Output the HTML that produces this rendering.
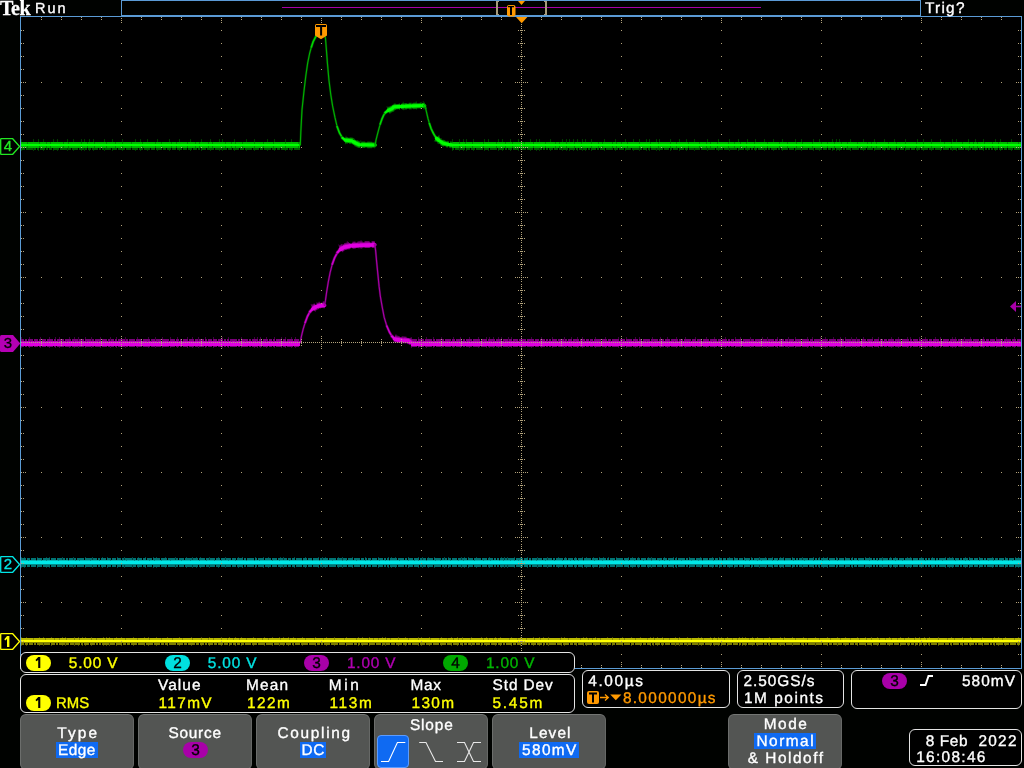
<!DOCTYPE html><html><head><meta charset="utf-8"><title>Tek scope</title><style>
html,body{margin:0;padding:0;background:#000200}
body{width:1024px;height:768px;position:relative;overflow:hidden;font-family:"Liberation Sans",sans-serif;font-size:15.4px;line-height:20px;color:#fff}
#scope{position:absolute;left:0;top:0;will-change:transform}
.mk{font-family:"Liberation Sans",sans-serif}
#txt{position:absolute;left:0;top:0;width:1024px;height:768px;will-change:transform}
.t{position:absolute;white-space:pre;height:20px;-webkit-text-stroke:0.35px currentColor;text-rendering:geometricPrecision}
.box{position:absolute;border:1px solid #e4e4e4;border-radius:6px;background:#000;box-sizing:border-box}
.btn{position:absolute;top:714px;height:56px;width:114px;background:#535553;border-radius:6px;box-sizing:border-box;border:1px solid #666866;border-top-color:#747674;border-left-color:#6c6e6c}
.hl{position:absolute;background:#0f6af2}
.pill{position:absolute;width:25px;height:16px;border-radius:8px;color:#000;text-align:center;line-height:15px;font-size:16px;-webkit-text-stroke:0.3px #000}
#tek{position:absolute;left:0;top:-3px;font:bold 20.6px "Liberation Serif",serif;letter-spacing:-0.5px;line-height:22px;transform-origin:0 0;transform:scaleX(0.975);-webkit-text-stroke:0.3px #fff}

</style></head><body>
<svg id="scope" width="1024" height="768" viewBox="0 0 1024 768">
<rect x="21" y="17" width="1000" height="651" fill="#000"/>
<g fill="none" stroke-linejoin="round">
<g shape-rendering="crispEdges">
<path d="M21 641.5H1021" stroke="#444400" stroke-width="9" stroke-dasharray="1 4 1 12 1 3 1 7 1 10 1 2 1 8 1 3 1 3 1 2 1 5 1 11 1 2 1 2 1 6 1 4 1 11 1 10 1 3 1 7 1 10 1 11 1 11 1 9 1 7 1 11 1 7 1 5 1 5 1 11 1 10 1 7 1 6 1 3 1 4 1 4 1 8 1 12 1 10 1 7 1 11 1 11 1 3 1 6 1 12 1 2 1 12 1 6 1 12 1 2 1 7 1 11 1 9 1 5 1 4 1 8 1 9 1 4 1 8 1 4 1 10 1 8 1 12 1 5 1 3 1 4 1 12 1 2 1 11 1 6 1 2 1 8 1 11 1 4 1 9 1 8 1 8 1 9 1 2 1 3"/>
<path d="M21 641.5H1021" stroke="#7c7c00" stroke-width="7" stroke-dasharray="3 1 3 1 4 1 2 1 6 1 6 1 4 1 2 1 6 1 3 1 4 1 5 1 2 1 5 1 5 1 2 1 2 1 7 1 5 1 6 1 3 1 3 1 6 1 7 1 7 1 6 1 3 1 3 1 7 1 6 1 3 1 7 1 3 1 4 1 2 1 5 1 3 1 5 1 4 1 3 1 3 1 3 1 3 1 6 1 5 1 7 1 7 1 5 1 5 1 5 1 2 1 5 1 7 1 7 1 3 1 2 1 6 1 7 1 6 1 7 1 3 1 2 1 7 1 6 1 5 1 3 1 4 1 4 1 6 1 4 1 3 1 7 1 5 1 6 1 6 1 6 1 5 1 6 1 3 1 3 1"/>
<path d="M21 640.5H1021" stroke="#8c8c00" stroke-width="5"/>
<path d="M21 640.0H1021" stroke="#b8b800" stroke-width="4" stroke-dasharray="12 1 11 1 8 1 4 1 6 1 7 1 4 1 11 1 4 1 8 1 7 1 11 1 11 1 11 1 11 1 10 1 9 1 9 1 8 1 6 1 4 1 7 1 5 1 5 1 5 1 6 1 9 1 5 1 5 1 11 1 8 1 6 1 8 1 8 1 8 1 10 1 9 1 11 1 11 1 4 1 4 1 7 1 3 1 7 1 9 1 9 1 11 1 8 1 7 1 5 1 4 1 3 1 7 1 12 1 4 1 4 1 3 1 11 1 7 1 3 1 4 1 7 1 5 1 7 1 11 1 7 1 11 1 7 1 3 1 3 1 3 1 11 1 6 1 4 1 10 1 11 1 6 1 8 1 5 1 8 1"/>
<path d="M21 641.0H1021" stroke="#ffff00" stroke-width="2"/>
</g>
<g shape-rendering="crispEdges">
<path d="M21 562.5H1021" stroke="#004040" stroke-width="11" stroke-dasharray="1 2 1 12 1 8 1 2 1 12 1 10 1 11 1 6 1 9 1 4 1 9 1 6 1 7 1 5 1 6 1 7 1 2 1 8 1 9 1 10 1 5 1 3 1 3 1 8 1 8 1 6 1 12 1 3 1 12 1 7 1 4 1 11 1 2 1 10 1 10 1 12 1 3 1 2 1 12 1 3 1 9 1 12 1 12 1 9 1 2 1 3 1 12 1 9 1 3 1 5 1 5 1 9 1 3 1 12 1 2 1 3 1 7 1 12 1 11 1 2 1 2 1 6 1 5 1 6 1 9 1 9 1 10 1 6 1 9 1 6 1 3 1 6 1 5 1 3 1 4 1 7 1 11 1 3 1 5 1 9"/>
<path d="M21 562.5H1021" stroke="#007474" stroke-width="9" stroke-dasharray="5 1 3 1 5 1 5 1 7 1 5 1 5 1 2 1 2 1 4 1 2 1 7 1 7 1 4 1 2 1 5 1 4 1 4 1 4 1 2 1 7 1 3 1 5 1 3 1 5 1 7 1 6 1 7 1 2 1 5 1 7 1 5 1 6 1 3 1 5 1 4 1 4 1 5 1 4 1 6 1 2 1 7 1 2 1 6 1 6 1 5 1 5 1 3 1 3 1 3 1 6 1 4 1 4 1 6 1 2 1 5 1 7 1 5 1 4 1 5 1 6 1 3 1 2 1 3 1 5 1 5 1 2 1 2 1 7 1 6 1 2 1 5 1 5 1 2 1 3 1 6 1 7 1 2 1 2 1 3 1"/>
<path d="M21 562.5H1021" stroke="#008c8c" stroke-width="5"/>
<path d="M21 562.0H1021" stroke="#00b8b8" stroke-width="4" stroke-dasharray="7 1 7 1 4 1 4 1 11 1 9 1 6 1 3 1 10 1 8 1 10 1 11 1 3 1 7 1 3 1 10 1 4 1 6 1 8 1 10 1 8 1 8 1 6 1 7 1 6 1 6 1 6 1 10 1 7 1 4 1 12 1 6 1 9 1 12 1 9 1 6 1 12 1 9 1 3 1 9 1 8 1 4 1 8 1 5 1 3 1 9 1 8 1 5 1 3 1 7 1 8 1 4 1 9 1 7 1 4 1 10 1 8 1 6 1 8 1 3 1 6 1 3 1 3 1 4 1 7 1 4 1 8 1 8 1 7 1 7 1 3 1 3 1 4 1 10 1 7 1 10 1 10 1 3 1 5 1 8 1"/>
<path d="M21 562.5H1021" stroke="#00e8e8" stroke-width="3"/>
</g>
<g shape-rendering="crispEdges">
<path d="M21 342.5H300.4" stroke="#400040" stroke-width="11" stroke-dasharray="1 7 1 10 1 8 1 5 1 3 1 9 1 4 1 3 1 6 1 5 1 8 1 9 1 5 1 8 1 11 1 10 1 6 1 6 1 7 1 6 1 9 1 4 1 5 1 6 1 7 1 8 1 5 1 12 1 12 1 2 1 2 1 5 1 7 1 6 1 3 1 5 1 3 1 10 1 9 1 12 1 3 1 5 1 7 1 4 1 5 1 2 1 2 1 8 1 4 1 3 1 2 1 10 1 3 1 3 1 12 1 12 1 12 1 8 1 8 1 12 1 8 1 6 1 8 1 2 1 12 1 8 1 5 1 8 1 8 1 3 1 11 1 9 1 4 1 2 1 12 1 3 1 10 1 4 1 6 1 10"/>
<path d="M21 343.0H300.4" stroke="#780078" stroke-width="8" stroke-dasharray="3 1 2 1 5 1 4 1 2 1 4 1 6 1 2 1 7 1 6 1 6 1 5 1 6 1 2 1 6 1 5 1 2 1 3 1 2 1 7 1 2 1 6 1 6 1 7 1 4 1 5 1 7 1 5 1 3 1 2 1 5 1 5 1 3 1 5 1 2 1 4 1 4 1 5 1 2 1 2 1 7 1 2 1 7 1 2 1 6 1 3 1 5 1 3 1 2 1 6 1 3 1 6 1 5 1 4 1 3 1 6 1 4 1 2 1 3 1 3 1 7 1 5 1 4 1 6 1 7 1 5 1 4 1 7 1 4 1 4 1 4 1 2 1 3 1 6 1 4 1 4 1 7 1 7 1 3 1 4 1"/>
<path d="M21 343.5H300.4" stroke="#900090" stroke-width="5"/>
<path d="M21 343.5H300.4" stroke="#b800b8" stroke-width="5" stroke-dasharray="9 1 3 1 10 1 12 1 3 1 3 1 7 1 11 1 11 1 9 1 12 1 6 1 12 1 5 1 3 1 5 1 4 1 5 1 9 1 3 1 11 1 12 1 12 1 6 1 3 1 3 1 9 1 6 1 3 1 3 1 5 1 6 1 12 1 11 1 4 1 3 1 11 1 9 1 10 1 10 1 6 1 7 1 3 1 8 1 3 1 11 1 11 1 7 1 4 1 5 1 6 1 5 1 6 1 8 1 9 1 10 1 3 1 6 1 6 1 12 1 12 1 5 1 3 1 4 1 8 1 3 1 3 1 3 1 3 1 12 1 6 1 9 1 6 1 6 1 3 1 4 1 10 1 5 1 6 1 8 1"/>
<path d="M21 344.0H300.4" stroke="#e000e0" stroke-width="4"/>
</g>
<g shape-rendering="crispEdges">
<path d="M411 342.5H1021" stroke="#400040" stroke-width="11" stroke-dasharray="1 6 1 7 1 6 1 7 1 11 1 6 1 8 1 8 1 7 1 2 1 3 1 4 1 2 1 6 1 2 1 9 1 9 1 9 1 10 1 11 1 6 1 5 1 4 1 12 1 9 1 12 1 7 1 8 1 3 1 12 1 7 1 6 1 8 1 8 1 9 1 10 1 7 1 10 1 9 1 4 1 9 1 11 1 4 1 9 1 10 1 6 1 11 1 4 1 7 1 4 1 7 1 6 1 4 1 5 1 4 1 6 1 8 1 5 1 12 1 6 1 8 1 2 1 8 1 5 1 9 1 4 1 11 1 2 1 8 1 5 1 12 1 12 1 9 1 7 1 12 1 8 1 8 1 6 1 9 1 2"/>
<path d="M411 343.0H1021" stroke="#780078" stroke-width="8" stroke-dasharray="6 1 6 1 7 1 2 1 5 1 2 1 6 1 3 1 6 1 2 1 6 1 7 1 6 1 7 1 6 1 5 1 3 1 5 1 7 1 7 1 4 1 5 1 2 1 2 1 5 1 6 1 2 1 4 1 6 1 5 1 3 1 3 1 7 1 5 1 3 1 7 1 5 1 6 1 5 1 3 1 7 1 7 1 5 1 5 1 7 1 4 1 7 1 4 1 5 1 6 1 7 1 3 1 5 1 2 1 3 1 7 1 7 1 3 1 7 1 4 1 6 1 3 1 5 1 3 1 5 1 6 1 7 1 3 1 7 1 6 1 7 1 7 1 6 1 4 1 3 1 5 1 6 1 5 1 3 1 3 1"/>
<path d="M411 343.5H1021" stroke="#900090" stroke-width="5"/>
<path d="M411 343.5H1021" stroke="#b800b8" stroke-width="5" stroke-dasharray="5 1 5 1 10 1 7 1 8 1 9 1 5 1 3 1 12 1 8 1 11 1 10 1 3 1 9 1 8 1 8 1 10 1 7 1 8 1 7 1 7 1 8 1 9 1 11 1 11 1 6 1 4 1 6 1 7 1 12 1 3 1 11 1 11 1 9 1 4 1 3 1 10 1 11 1 12 1 12 1 6 1 10 1 4 1 3 1 4 1 8 1 7 1 7 1 9 1 8 1 9 1 10 1 4 1 12 1 10 1 3 1 12 1 10 1 11 1 4 1 6 1 3 1 3 1 4 1 6 1 5 1 3 1 12 1 10 1 3 1 5 1 7 1 10 1 3 1 3 1 3 1 9 1 7 1 10 1 8 1"/>
<path d="M411 344.0H1021" stroke="#e000e0" stroke-width="4"/>
</g>
<polyline points="300.4,342.5 301.4,336.3 303.1,329.4 305.2,322.5" stroke="#640064" stroke-width="2.2" stroke-opacity="0.55" stroke-linecap="round"/>
<polyline points="300.4,342.5 301.4,336.3 303.1,329.4 305.2,322.5" stroke="#a800a8" stroke-width="1.15" stroke-linecap="round"/>
<polyline points="305.2,322.5 307.4,316.5 310.0,311.7" stroke="#640064" stroke-width="2.8" stroke-opacity="0.7" stroke-linecap="round"/>
<polyline points="305.2,322.5 307.4,316.5 310.0,311.7" stroke="#cc00cc" stroke-width="1.6" stroke-linecap="round"/>
<polyline points="310.0,311.7 312.9,308.6" stroke="#640064" stroke-width="3.6" stroke-opacity="0.8" stroke-linecap="round"/>
<polyline points="310.0,311.7 312.9,308.6" stroke="#e000e0" stroke-width="2.2" stroke-linecap="round"/>
<polyline points="312.9,308.1 316.4,305.9 319.8,305.0 324.6,304.5" stroke="#400040" stroke-width="9" stroke-dasharray="1 19 1 8 1 15 1 24 1 19 1 18 1 22 1 13 1 5 1 23 1 8 1 22 1 11 1 16 1 23 1 18 1 26 1 14 1 12 1 9 1 13 1 22 1 12 1 15 1 21 1 16 1 11 1 23 1 25 1 18 1 12 1 16 1 21 1 21 1 6 1 16 1 20 1 19 1 10 1 10 1 9 1 15 1 16 1 11 1 19 1 7 1 24 1 6 1 14 1 15 1 20 1 7 1 10 1 22 1 12 1 17 1 18 1 12 1 14 1 9"/>
<polyline points="312.9,308.3 316.4,306.1 319.8,305.2 324.6,304.7" stroke="#640064" stroke-width="7" stroke-dasharray="4 1 1 1 1 3 3 3 4 2 1 3 4 1 1 2 3 3 2 3 1 3 5 2 2 2 2 2 2 3 2 1 1 2 3 1 5 1 1 2 5 3 4 1 1 1 3 1 2 3 3 3 5 2 1 2 3 2 3 2 1 2 4 2 2 2 2 1 1 2 2 1 2 1 1 3 3 3 2 2 1 2 1 3 1 2 3 2 2 2 1 3 3 1 3 1 1 1 4 3 2 2 2 2 4 2 2 1 1 2 5 2 3 1 3 2 1 2 4 2"/>
<polyline points="312.9,308.6 316.4,306.4 319.8,305.5 324.6,305.0" stroke="#a400a4" stroke-width="5.2" stroke-dasharray="4 1 11 1 13 1 11 1 7 1 7 1 8 1 7 1 6 1 9 1 9 1 3 1 5 1 10 1 11 1 10 1 11 1 5 1 9 1 9 1 7 1 5 1 11 1 14 1 6 1 4 1 7 1 6 1 12 1 12 1 6 1 4 1 14 1 11 1 8 1 13 1 4 1 9 1 5 1 6 1 12 1 3 1 14 1 12 1 8 1 11 1 4 1 14 1 8 1 12 1 7 1 14 1 10 1 11 1 3 1 4 1 12 1 5 1 7 1 11 1"/>
<polyline points="312.9,308.8 316.4,306.6 319.8,305.7 324.6,305.2" stroke="#e000e0" stroke-width="3.6" stroke-linecap="round"/>
<polyline points="324.6,305.0 325.5,300.2 326.7,291.6 328.4,281.3 330.1,272.7 332.3,264.1" stroke="#640064" stroke-width="2.2" stroke-opacity="0.55" stroke-linecap="round"/>
<polyline points="324.6,305.0 325.5,300.2 326.7,291.6 328.4,281.3 330.1,272.7 332.3,264.1" stroke="#a800a8" stroke-width="1.15" stroke-linecap="round"/>
<polyline points="332.3,264.1 334.7,257.6 337.5,252.4" stroke="#640064" stroke-width="2.8" stroke-opacity="0.7" stroke-linecap="round"/>
<polyline points="332.3,264.1 334.7,257.6 337.5,252.4" stroke="#cc00cc" stroke-width="1.6" stroke-linecap="round"/>
<polyline points="337.5,252.4 340.4,249.2" stroke="#640064" stroke-width="3.6" stroke-opacity="0.8" stroke-linecap="round"/>
<polyline points="337.5,252.4 340.4,249.2" stroke="#e000e0" stroke-width="2.2" stroke-linecap="round"/>
<polyline points="340.4,248.7 343.9,246.6 349.9,245.2 360.2,244.5 374.8,244.2" stroke="#400040" stroke-width="9" stroke-dasharray="1 7 1 12 1 23 1 20 1 26 1 7 1 7 1 5 1 7 1 19 1 7 1 7 1 8 1 11 1 25 1 16 1 4 1 26 1 23 1 16 1 15 1 16 1 14 1 22 1 16 1 14 1 25 1 11 1 25 1 15 1 20 1 6 1 17 1 20 1 11 1 17 1 18 1 5 1 24 1 25 1 24 1 23 1 12 1 20 1 17 1 5 1 7 1 15 1 7 1 23 1 6 1 22 1 18 1 20 1 13 1 22 1 12 1 6 1 18 1 24"/>
<polyline points="340.4,248.9 343.9,246.8 349.9,245.4 360.2,244.7 374.8,244.4" stroke="#640064" stroke-width="7" stroke-dasharray="4 1 5 3 3 2 5 2 5 2 4 2 1 1 3 1 2 3 5 2 5 2 1 2 2 1 3 3 3 2 3 2 2 2 1 1 2 3 1 3 3 2 1 3 4 2 3 3 1 3 2 3 2 2 3 3 3 1 2 3 5 2 5 1 4 2 2 2 1 1 4 3 5 1 4 2 5 1 4 2 5 3 1 2 4 3 4 2 3 2 3 2 5 3 5 2 3 1 4 2 4 2 2 3 3 1 4 3 4 3 2 1 3 2 5 1 3 1 4 1"/>
<polyline points="340.4,249.2 343.9,247.1 349.9,245.7 360.2,245.0 374.8,244.7" stroke="#a400a4" stroke-width="5.2" stroke-dasharray="3 1 7 1 7 1 11 1 11 1 9 1 8 1 12 1 10 1 13 1 11 1 4 1 8 1 13 1 6 1 10 1 10 1 14 1 5 1 8 1 4 1 11 1 4 1 14 1 11 1 13 1 11 1 11 1 11 1 9 1 3 1 8 1 14 1 3 1 7 1 7 1 4 1 13 1 6 1 10 1 13 1 12 1 9 1 5 1 11 1 3 1 4 1 11 1 10 1 3 1 13 1 5 1 8 1 5 1 7 1 12 1 8 1 10 1 3 1 6 1"/>
<polyline points="340.4,249.4 343.9,247.3 349.9,245.9 360.2,245.2 374.8,244.9" stroke="#e000e0" stroke-width="3.6" stroke-linecap="round"/>
<polyline points="374.8,244.7 375.6,250.3 376.7,262.4 377.9,274.4 379.1,286.4 380.4,296.7 382.2,307.0 384.2,317.4 386.8,326.0" stroke="#640064" stroke-width="2.2" stroke-opacity="0.55" stroke-linecap="round"/>
<polyline points="374.8,244.7 375.6,250.3 376.7,262.4 377.9,274.4 379.1,286.4 380.4,296.7 382.2,307.0 384.2,317.4 386.8,326.0" stroke="#a800a8" stroke-width="1.15" stroke-linecap="round"/>
<polyline points="386.8,326.0 389.4,332.0 392.0,336.3" stroke="#640064" stroke-width="2.8" stroke-opacity="0.7" stroke-linecap="round"/>
<polyline points="386.8,326.0 389.4,332.0 392.0,336.3" stroke="#cc00cc" stroke-width="1.6" stroke-linecap="round"/>
<polyline points="392.0,336.3 394.5,338.8" stroke="#640064" stroke-width="3.6" stroke-opacity="0.8" stroke-linecap="round"/>
<polyline points="392.0,336.3 394.5,338.8" stroke="#e000e0" stroke-width="2.2" stroke-linecap="round"/>
<polyline points="394.5,338.3 398.0,339.2 408.3,340.1 411.0,342.0" stroke="#400040" stroke-width="9" stroke-dasharray="1 18 1 23 1 11 1 5 1 22 1 14 1 18 1 17 1 19 1 11 1 25 1 17 1 16 1 4 1 6 1 9 1 16 1 4 1 16 1 7 1 21 1 14 1 24 1 7 1 15 1 16 1 18 1 15 1 17 1 12 1 14 1 11 1 6 1 12 1 21 1 18 1 9 1 15 1 16 1 24 1 13 1 20 1 11 1 25 1 26 1 23 1 22 1 21 1 16 1 8 1 25 1 21 1 16 1 25 1 13 1 16 1 26 1 11 1 10 1 6"/>
<polyline points="394.5,338.5 398.0,339.4 408.3,340.3 411.0,342.2" stroke="#640064" stroke-width="7" stroke-dasharray="5 2 5 2 2 1 3 1 2 2 2 3 4 2 3 2 4 3 2 2 2 1 3 3 3 2 1 3 4 1 4 2 1 1 3 1 3 3 2 3 1 2 1 3 2 2 2 2 2 2 1 3 3 3 2 3 2 3 4 3 5 2 4 3 5 2 1 1 3 1 5 3 1 1 1 1 3 1 3 3 1 2 4 3 5 1 3 3 1 2 4 2 3 3 5 3 4 3 1 3 2 2 5 1 4 1 1 3 5 2 2 3 2 3 2 3 3 1 1 1"/>
<polyline points="394.5,338.8 398.0,339.7 408.3,340.6 411.0,342.5" stroke="#a400a4" stroke-width="5.2" stroke-dasharray="8 1 9 1 6 1 5 1 13 1 13 1 6 1 3 1 5 1 14 1 5 1 12 1 8 1 11 1 5 1 12 1 9 1 4 1 3 1 10 1 3 1 7 1 6 1 14 1 10 1 5 1 10 1 12 1 7 1 11 1 3 1 10 1 4 1 14 1 4 1 9 1 6 1 3 1 4 1 13 1 13 1 4 1 14 1 3 1 5 1 8 1 13 1 4 1 14 1 9 1 13 1 8 1 8 1 11 1 7 1 3 1 4 1 3 1 10 1 10 1"/>
<polyline points="394.5,339.0 398.0,339.9 408.3,340.8 411.0,342.7" stroke="#e000e0" stroke-width="3.6" stroke-linecap="round"/>
<g shape-rendering="crispEdges">
<path d="M21 145.0H300.3" stroke="#003c00" stroke-width="12" stroke-dasharray="1 11 1 4 1 4 1 9 1 3 1 9 1 5 1 7 1 2 1 4 1 3 1 10 1 7 1 9 1 12 1 4 1 6 1 9 1 11 1 9 1 10 1 10 1 8 1 8 1 2 1 11 1 11 1 7 1 12 1 6 1 10 1 5 1 12 1 3 1 12 1 10 1 7 1 11 1 8 1 3 1 4 1 10 1 5 1 12 1 5 1 9 1 10 1 5 1 10 1 8 1 9 1 10 1 12 1 9 1 10 1 5 1 3 1 7 1 8 1 2 1 2 1 11 1 9 1 3 1 8 1 11 1 11 1 7 1 7 1 12 1 6 1 5 1 10 1 9 1 11 1 3 1 10 1 11 1 2 1 6"/>
<path d="M21 146.0H300.3" stroke="#005c00" stroke-width="8" stroke-dasharray="4 1 7 1 2 1 2 1 5 1 2 1 3 1 6 1 7 1 3 1 6 1 5 1 2 1 3 1 6 1 2 1 2 1 6 1 5 1 7 1 5 1 6 1 4 1 6 1 4 1 6 1 3 1 4 1 4 1 5 1 4 1 4 1 4 1 2 1 5 1 7 1 7 1 4 1 4 1 6 1 4 1 7 1 6 1 3 1 7 1 4 1 3 1 7 1 4 1 7 1 6 1 4 1 4 1 7 1 7 1 5 1 3 1 4 1 3 1 2 1 5 1 5 1 3 1 3 1 7 1 4 1 2 1 6 1 6 1 4 1 5 1 7 1 7 1 5 1 3 1 4 1 3 1 3 1 3 1 5 1"/>
<path d="M21 145.0H300.3" stroke="#008800" stroke-width="6"/>
<path d="M21 145.0H300.3" stroke="#00b800" stroke-width="6" stroke-dasharray="6 1 11 1 6 1 3 1 12 1 4 1 12 1 5 1 6 1 11 1 8 1 6 1 8 1 10 1 12 1 5 1 9 1 4 1 10 1 7 1 3 1 8 1 3 1 12 1 5 1 3 1 6 1 11 1 8 1 9 1 11 1 12 1 6 1 10 1 7 1 11 1 8 1 5 1 3 1 4 1 5 1 9 1 3 1 4 1 11 1 11 1 7 1 5 1 5 1 8 1 10 1 6 1 9 1 6 1 3 1 3 1 9 1 3 1 12 1 9 1 6 1 7 1 7 1 6 1 8 1 8 1 7 1 10 1 12 1 10 1 5 1 7 1 8 1 10 1 5 1 12 1 6 1 6 1 3 1 5 1"/>
<path d="M21 145.0H300.3" stroke="#00ff00" stroke-width="2"/>
</g>
<g shape-rendering="crispEdges">
<path d="M452 145.0H1021" stroke="#003c00" stroke-width="12" stroke-dasharray="1 6 1 3 1 2 1 6 1 10 1 3 1 9 1 3 1 7 1 7 1 11 1 5 1 2 1 10 1 11 1 3 1 2 1 3 1 3 1 4 1 2 1 5 1 12 1 10 1 9 1 7 1 5 1 6 1 2 1 6 1 2 1 10 1 8 1 6 1 7 1 12 1 10 1 10 1 8 1 8 1 7 1 8 1 8 1 8 1 12 1 5 1 11 1 5 1 12 1 3 1 2 1 10 1 12 1 10 1 9 1 9 1 10 1 11 1 5 1 7 1 8 1 11 1 3 1 11 1 6 1 7 1 11 1 4 1 10 1 10 1 10 1 7 1 12 1 4 1 4 1 7 1 7 1 3 1 4 1 8"/>
<path d="M452 146.0H1021" stroke="#005c00" stroke-width="8" stroke-dasharray="2 1 4 1 5 1 4 1 4 1 7 1 5 1 7 1 6 1 2 1 4 1 6 1 6 1 6 1 5 1 2 1 2 1 2 1 4 1 4 1 3 1 5 1 6 1 2 1 3 1 4 1 2 1 5 1 2 1 5 1 7 1 4 1 5 1 6 1 7 1 2 1 4 1 2 1 5 1 6 1 5 1 2 1 5 1 5 1 3 1 5 1 5 1 6 1 7 1 7 1 5 1 7 1 6 1 5 1 2 1 3 1 6 1 2 1 2 1 6 1 2 1 7 1 5 1 6 1 6 1 5 1 7 1 4 1 3 1 3 1 6 1 2 1 5 1 7 1 6 1 6 1 7 1 4 1 3 1 5 1"/>
<path d="M452 145.0H1021" stroke="#008800" stroke-width="6"/>
<path d="M452 145.0H1021" stroke="#00b800" stroke-width="6" stroke-dasharray="7 1 5 1 6 1 10 1 12 1 8 1 6 1 11 1 8 1 11 1 9 1 3 1 6 1 7 1 6 1 9 1 6 1 3 1 9 1 3 1 4 1 5 1 11 1 10 1 7 1 11 1 5 1 11 1 10 1 6 1 3 1 6 1 10 1 5 1 5 1 5 1 7 1 12 1 11 1 7 1 8 1 5 1 9 1 8 1 5 1 6 1 6 1 5 1 9 1 9 1 3 1 4 1 11 1 7 1 8 1 10 1 6 1 7 1 12 1 6 1 10 1 6 1 3 1 3 1 6 1 7 1 5 1 8 1 10 1 8 1 5 1 7 1 11 1 4 1 5 1 10 1 3 1 11 1 9 1 9 1"/>
<path d="M452 145.0H1021" stroke="#00ff00" stroke-width="2"/>
</g>
<polyline points="300.3,145.0 300.8,132.2 302.0,109.8 304.0,91.0 305.8,76.0 307.7,62.9 309.6,53.5 311.4,47.0" stroke="#005c00" stroke-width="2.2" stroke-opacity="0.55" stroke-linecap="round"/>
<polyline points="300.3,145.0 300.8,132.2 302.0,109.8 304.0,91.0 305.8,76.0 307.7,62.9 309.6,53.5 311.4,47.0" stroke="#00b000" stroke-width="1.15" stroke-linecap="round"/>
<polyline points="311.4,47.0 313.3,41.3 315.8,36.6 318.0,33.0" stroke="#005c00" stroke-width="2.8" stroke-opacity="0.7" stroke-linecap="round"/>
<polyline points="311.4,47.0 313.3,41.3 315.8,36.6 318.0,33.0" stroke="#00d800" stroke-width="1.6" stroke-linecap="round"/>
<polyline points="318.0,33.0 320.5,30.5 322.5,30.0 324.0,31.5" stroke="#005c00" stroke-width="3.6" stroke-opacity="0.8" stroke-linecap="round"/>
<polyline points="318.0,33.0 320.5,30.5 322.5,30.0 324.0,31.5" stroke="#00ff00" stroke-width="2.2" stroke-linecap="round"/>
<polyline points="324.0,31.5 325.5,38.5 326.4,49.8 327.4,62.9 328.9,79.8 330.8,94.8 332.6,106.0 334.9,117.2 337.1,126.6" stroke="#005c00" stroke-width="2.2" stroke-opacity="0.55" stroke-linecap="round"/>
<polyline points="324.0,31.5 325.5,38.5 326.4,49.8 327.4,62.9 328.9,79.8 330.8,94.8 332.6,106.0 334.9,117.2 337.1,126.6" stroke="#00b000" stroke-width="1.15" stroke-linecap="round"/>
<polyline points="337.1,126.6 339.6,133.2 342.4,137.9" stroke="#005c00" stroke-width="2.8" stroke-opacity="0.7" stroke-linecap="round"/>
<polyline points="337.1,126.6 339.6,133.2 342.4,137.9" stroke="#00d800" stroke-width="1.6" stroke-linecap="round"/>
<polyline points="342.4,137.9 345.2,140.2" stroke="#005c00" stroke-width="3.6" stroke-opacity="0.8" stroke-linecap="round"/>
<polyline points="342.4,137.9 345.2,140.2" stroke="#00ff00" stroke-width="2.2" stroke-linecap="round"/>
<polyline points="345.2,139.9 351.8,140.5 355.5,142.7 359.2,144.4 375.3,144.7" stroke="#003c00" stroke-width="8.5" stroke-dasharray="1 15 1 15 1 25 1 14 1 24 1 13 1 12 1 7 1 7 1 19 1 21 1 14 1 11 1 22 1 20 1 15 1 13 1 21 1 8 1 21 1 7 1 7 1 19 1 26 1 6 1 8 1 4 1 16 1 13 1 6 1 11 1 23 1 11 1 23 1 7 1 10 1 13 1 6 1 22 1 4 1 17 1 5 1 11 1 20 1 8 1 8 1 10 1 25 1 26 1 4 1 5 1 20 1 6 1 10 1 15 1 6 1 22 1 19 1 8 1 26"/>
<polyline points="345.2,140.2 351.8,140.8 355.5,143.0 359.2,144.7 375.3,145.0" stroke="#005c00" stroke-width="6.6" stroke-dasharray="3 1 4 3 5 1 4 2 5 2 5 3 1 1 3 1 2 1 5 2 5 1 4 3 1 2 4 3 3 2 4 1 2 3 3 3 5 2 3 1 3 2 5 1 1 2 4 2 5 2 4 1 3 3 2 1 3 2 4 3 1 2 3 1 3 1 4 2 5 1 1 1 1 2 2 2 3 2 2 2 2 1 3 3 4 2 4 2 5 3 2 1 4 3 1 1 2 1 2 2 5 3 3 3 3 3 1 3 5 3 4 1 3 3 4 1 5 3 3 2"/>
<polyline points="345.2,140.2 351.8,140.8 355.5,143.0 359.2,144.7 375.3,145.0" stroke="#00a000" stroke-width="5" stroke-dasharray="7 1 8 1 13 1 11 1 13 1 10 1 14 1 3 1 11 1 10 1 11 1 14 1 3 1 10 1 3 1 5 1 12 1 9 1 14 1 13 1 7 1 9 1 13 1 13 1 10 1 14 1 8 1 12 1 3 1 5 1 11 1 5 1 14 1 13 1 3 1 9 1 14 1 7 1 10 1 12 1 10 1 4 1 8 1 8 1 10 1 4 1 12 1 11 1 13 1 8 1 5 1 11 1 13 1 4 1 9 1 14 1 11 1 13 1 7 1 3 1"/>
<polyline points="345.2,140.2 351.8,140.8 355.5,143.0 359.2,144.7 375.3,145.0" stroke="#00ff00" stroke-width="3.2" stroke-linecap="round"/>
<polyline points="375.3,145.0 375.9,140.5 377.3,134.9 378.8,129.2 380.2,124.1" stroke="#005c00" stroke-width="2.2" stroke-opacity="0.55" stroke-linecap="round"/>
<polyline points="375.3,145.0 375.9,140.5 377.3,134.9 378.8,129.2 380.2,124.1" stroke="#00b000" stroke-width="1.15" stroke-linecap="round"/>
<polyline points="380.2,124.1 381.8,119.4 383.4,115.7 385.3,112.6" stroke="#005c00" stroke-width="2.8" stroke-opacity="0.7" stroke-linecap="round"/>
<polyline points="380.2,124.1 381.8,119.4 383.4,115.7 385.3,112.6" stroke="#00d800" stroke-width="1.6" stroke-linecap="round"/>
<polyline points="385.3,112.6 388.1,110.5" stroke="#005c00" stroke-width="3.6" stroke-opacity="0.8" stroke-linecap="round"/>
<polyline points="385.3,112.6 388.1,110.5" stroke="#00ff00" stroke-width="2.2" stroke-linecap="round"/>
<polyline points="388.1,110.2 391.9,108.5 393.8,106.6 406.9,105.9 424.7,105.2" stroke="#003c00" stroke-width="8.5" stroke-dasharray="1 15 1 12 1 6 1 23 1 26 1 13 1 24 1 24 1 16 1 14 1 16 1 14 1 9 1 21 1 25 1 8 1 14 1 17 1 20 1 22 1 22 1 16 1 22 1 25 1 8 1 25 1 20 1 13 1 24 1 13 1 24 1 23 1 26 1 23 1 23 1 11 1 7 1 25 1 15 1 26 1 7 1 10 1 18 1 18 1 20 1 18 1 5 1 7 1 11 1 24 1 14 1 10 1 13 1 11 1 4 1 17 1 6 1 6 1 16 1 20"/>
<polyline points="388.1,110.5 391.9,108.8 393.8,106.9 406.9,106.2 424.7,105.5" stroke="#005c00" stroke-width="6.6" stroke-dasharray="5 2 2 3 1 2 5 2 3 1 4 3 2 2 4 3 5 2 2 2 5 1 1 2 2 2 2 1 5 1 4 1 2 2 2 3 3 3 1 3 5 3 1 1 3 1 4 1 5 2 5 2 2 3 3 2 3 1 1 3 2 3 3 2 1 3 4 1 3 1 2 2 4 2 1 2 3 2 2 1 5 3 3 3 4 1 3 2 1 1 3 3 4 3 4 1 4 1 2 1 1 1 5 3 4 1 1 1 4 1 2 3 5 1 3 2 5 3 4 2"/>
<polyline points="388.1,110.5 391.9,108.8 393.8,106.9 406.9,106.2 424.7,105.5" stroke="#00a000" stroke-width="5" stroke-dasharray="13 1 3 1 6 1 9 1 4 1 6 1 10 1 4 1 10 1 9 1 14 1 14 1 12 1 4 1 12 1 4 1 6 1 9 1 13 1 6 1 6 1 3 1 3 1 6 1 13 1 11 1 7 1 5 1 3 1 4 1 5 1 11 1 12 1 4 1 3 1 3 1 11 1 14 1 13 1 10 1 13 1 11 1 3 1 11 1 6 1 14 1 13 1 4 1 11 1 13 1 4 1 4 1 8 1 7 1 7 1 10 1 6 1 4 1 3 1 13 1"/>
<polyline points="388.1,110.5 391.9,108.8 393.8,106.9 406.9,106.2 424.7,105.5" stroke="#00ff00" stroke-width="3.2" stroke-linecap="round"/>
<polyline points="424.7,105.5 425.6,108.2" stroke="#005c00" stroke-width="2.8" stroke-opacity="0.7" stroke-linecap="round"/>
<polyline points="424.7,105.5 425.6,108.2" stroke="#00d800" stroke-width="1.6" stroke-linecap="round"/>
<polyline points="425.6,108.2 426.8,113.3 428.0,118.5 429.4,123.6" stroke="#005c00" stroke-width="2.2" stroke-opacity="0.55" stroke-linecap="round"/>
<polyline points="425.6,108.2 426.8,113.3 428.0,118.5 429.4,123.6" stroke="#00b000" stroke-width="1.15" stroke-linecap="round"/>
<polyline points="429.4,123.6 431.0,128.3 432.7,132.0 434.5,135.3 436.4,138.2" stroke="#005c00" stroke-width="2.8" stroke-opacity="0.7" stroke-linecap="round"/>
<polyline points="429.4,123.6 431.0,128.3 432.7,132.0 434.5,135.3 436.4,138.2" stroke="#00d800" stroke-width="1.6" stroke-linecap="round"/>
<polyline points="436.4,137.9 439.7,140.7 443.4,143.0 448.1,144.1 452.0,144.7" stroke="#003c00" stroke-width="8.5" stroke-dasharray="1 18 1 23 1 6 1 5 1 25 1 17 1 9 1 18 1 26 1 12 1 15 1 14 1 7 1 18 1 24 1 23 1 12 1 4 1 21 1 14 1 21 1 14 1 11 1 6 1 7 1 14 1 24 1 15 1 21 1 18 1 10 1 24 1 17 1 24 1 10 1 4 1 17 1 9 1 23 1 26 1 16 1 14 1 4 1 26 1 24 1 23 1 24 1 23 1 26 1 13 1 6 1 21 1 6 1 6 1 21 1 19 1 18 1 7 1 13 1 17"/>
<polyline points="436.4,138.2 439.7,141.0 443.4,143.3 448.1,144.4 452.0,145.0" stroke="#005c00" stroke-width="6.6" stroke-dasharray="2 2 1 2 3 2 2 1 4 1 1 1 3 3 3 2 5 1 2 1 1 1 5 2 3 1 1 1 4 1 1 2 3 3 1 3 5 1 1 1 3 1 3 1 3 2 5 3 2 1 3 3 3 2 3 1 5 3 1 1 2 2 4 1 2 3 2 1 4 2 2 3 4 2 1 1 1 3 4 2 2 2 1 2 4 2 1 1 4 3 4 1 4 1 4 2 2 1 4 2 1 1 2 1 3 2 4 2 2 2 5 1 1 3 2 2 2 3 5 2"/>
<polyline points="436.4,138.2 439.7,141.0 443.4,143.3 448.1,144.4 452.0,145.0" stroke="#00a000" stroke-width="5" stroke-dasharray="4 1 9 1 6 1 11 1 6 1 4 1 7 1 10 1 4 1 13 1 4 1 7 1 4 1 14 1 10 1 5 1 13 1 13 1 13 1 11 1 10 1 13 1 5 1 8 1 8 1 14 1 3 1 14 1 10 1 3 1 10 1 6 1 14 1 12 1 4 1 3 1 3 1 10 1 4 1 8 1 13 1 12 1 6 1 6 1 10 1 6 1 3 1 5 1 9 1 12 1 5 1 3 1 12 1 12 1 10 1 5 1 6 1 7 1 5 1 11 1"/>
<polyline points="436.4,138.2 439.7,141.0 443.4,143.3 448.1,144.4 452.0,145.0" stroke="#00ff00" stroke-width="3.2" stroke-linecap="round"/>
</g>
<g shape-rendering="crispEdges" stroke="#b4a47c" stroke-width="1" fill="none">
<path d="M121.5 30V656" stroke-dasharray="1 12"/>
<path d="M221.5 30V656" stroke-dasharray="1 12"/>
<path d="M321.5 30V656" stroke-dasharray="1 12"/>
<path d="M421.5 30V656" stroke-dasharray="1 12"/>
<path d="M621.5 30V656" stroke-dasharray="1 12"/>
<path d="M721.5 30V656" stroke-dasharray="1 12"/>
<path d="M821.5 30V656" stroke-dasharray="1 12"/>
<path d="M921.5 30V656" stroke-dasharray="1 12"/>
<path d="M41 82.5H1003" stroke-dasharray="1 19"/>
<path d="M41 147.5H1003" stroke-dasharray="1 19"/>
<path d="M41 212.5H1003" stroke-dasharray="1 19"/>
<path d="M41 277.5H1003" stroke-dasharray="1 19"/>
<path d="M41 407.5H1003" stroke-dasharray="1 19"/>
<path d="M41 472.5H1003" stroke-dasharray="1 19"/>
<path d="M41 537.5H1003" stroke-dasharray="1 19"/>
<path d="M41 602.5H1003" stroke-dasharray="1 19"/>
<path d="M521.5 24V668" stroke-dasharray="1 1 1 1 1 2 1 1 1 1 1 1" stroke-dashoffset="7"/>
<path d="M518.5 30V660M524.5 30V660" stroke-dasharray="1 12 1 12 1 12 1 25"/>
<path d="M521.5 30V660" stroke-width="3" stroke-dasharray="1 12 1 12 1 12 1 25"/>
<path d="M21 342.5H1022" stroke-dasharray="1 1"/>
<path d="M41 339.5H1010M41 345.5H1010" stroke-dasharray="1 19 1 19 1 19 1 39"/>
<path d="M41 342.5H1010" stroke-width="3" stroke-dasharray="1 19 1 19 1 19 1 39"/>
<path d="M515 82.5H528M515 147.5H528M515 212.5H528M515 277.5H528M515 342.5H528M515 407.5H528M515 472.5H528M515 537.5H528M515 602.5H528" stroke-dasharray="1 1"/>
<path d="M121.5 336V349M221.5 336V349M321.5 336V349M421.5 336V349M521.5 336V349M621.5 336V349M721.5 336V349M821.5 336V349M921.5 336V349" stroke-dasharray="1 1"/>
<path d="M41 17.5H1010M41 19.5H1010M41 667.5H1010M41 665.5H1010" stroke-dasharray="1 19 1 19 1 19 1 39"/>
<path d="M21.5 30V660M23.5 30V660M1020.5 30V660M1018.5 30V660" stroke-dasharray="1 12 1 12 1 12 1 25"/>
<path d="M121 18.5h1M121 20.5h1M121 22.5h1M121 666.5h1M121 664.5h1M121 662.5h1M221 18.5h1M221 20.5h1M221 22.5h1M221 666.5h1M221 664.5h1M221 662.5h1M321 18.5h1M321 20.5h1M321 22.5h1M321 666.5h1M321 664.5h1M321 662.5h1M421 18.5h1M421 20.5h1M421 22.5h1M421 666.5h1M421 664.5h1M421 662.5h1M621 18.5h1M621 20.5h1M621 22.5h1M621 666.5h1M621 664.5h1M621 662.5h1M721 18.5h1M721 20.5h1M721 22.5h1M721 666.5h1M721 664.5h1M721 662.5h1M821 18.5h1M821 20.5h1M821 22.5h1M821 666.5h1M821 664.5h1M821 662.5h1M921 18.5h1M921 20.5h1M921 22.5h1M921 666.5h1M921 664.5h1M921 662.5h1M21 82.5h1M23 82.5h1M25 82.5h1M1020 82.5h1M1018 82.5h1M1016 82.5h1M21 147.5h1M23 147.5h1M25 147.5h1M1020 147.5h1M1018 147.5h1M1016 147.5h1M21 212.5h1M23 212.5h1M25 212.5h1M1020 212.5h1M1018 212.5h1M1016 212.5h1M21 277.5h1M23 277.5h1M25 277.5h1M1020 277.5h1M1018 277.5h1M1016 277.5h1M21 407.5h1M23 407.5h1M25 407.5h1M1020 407.5h1M1018 407.5h1M1016 407.5h1M21 472.5h1M23 472.5h1M25 472.5h1M1020 472.5h1M1018 472.5h1M1016 472.5h1M21 537.5h1M23 537.5h1M25 537.5h1M1020 537.5h1M1018 537.5h1M1016 537.5h1M21 602.5h1M23 602.5h1M25 602.5h1M1020 602.5h1M1018 602.5h1M1016 602.5h1"/>
</g>
<g shape-rendering="crispEdges" fill="none" stroke="#5b9bd5">
<path d="M20.5 16V669M1021.5 16V669M20 16.5H1022M20 668.5H1022" stroke-width="1"/>
<path d="M121 15.5H921" />
<path d="M121.5 0V16M920.5 0V16M121 0.5H921"/>
</g>
<g shape-rendering="crispEdges">
<path d="M282 7.5H761" stroke="#a800a8" stroke-width="1"/>
<path d="M499 1.5H496.5V14.5H499M497.5 1V15" fill="none" stroke="#a89c7c"/>
<path d="M544 1.5H546.5V14.5H544M545.5 1V15" fill="none" stroke="#a89c7c"/>
</g>
<rect x="507" y="5" width="8.5" height="11.5" rx="2" fill="#ff9900"/>
<path d="M508 6.6H514" stroke="#000" stroke-width="1.3" fill="none"/><path d="M511 6V15" stroke="#000" stroke-width="2" fill="none"/>
<path d="M518 1H525L521.5 5Z" fill="#ff9900"/>
<path d="M516 17H527.4L521.7 23.2Z" fill="#ff9900"/>
<path d="M316.5 24H325.5Q327 24 327 25.5V35.5L321 39.2L315 35.5V25.5Q315 24 316.5 24Z" fill="#ff9900"/>
<path d="M316 26H326M321.1 26V35.6" stroke="#000" stroke-width="2" fill="none"/>
<path d="M1010 306.5L1016 301V312Z" fill="#a800a8"/><path d="M1016 306.5H1021" stroke="#a800a8" stroke-width="1.6"/>
<path d="M1.2 138.7H12.7L19.6 146.5L12.7 154.3H1.2Q0.7 154.3 0.7 153.8V139.2Q0.7 138.7 1.2 138.7Z" fill="#000" stroke="#22e822" stroke-width="1.3"/>
<text x="8" y="151.4" font-size="15" text-anchor="middle" fill="#22e822" class="mk" stroke="#22e822" stroke-width="0.3">4</text>
<path d="M1.5 335.0H13L20.3 343.5L13 352.0H1.5Q0 352.0 0 350.5V336.5Q0 335.0 1.5 335.0Z" fill="#b400b4"/>
<text x="8" y="348.4" font-size="15" text-anchor="middle" fill="#000" class="mk" stroke="#000" stroke-width="0.3">3</text>
<path d="M1.2 556.7H12.7L19.6 564.5L12.7 572.3H1.2Q0.7 572.3 0.7 571.8V557.2Q0.7 556.7 1.2 556.7Z" fill="#000" stroke="#00e6e6" stroke-width="1.3"/>
<text x="8" y="569.4" font-size="15" text-anchor="middle" fill="#00e6e6" class="mk" stroke="#00e6e6" stroke-width="0.3">2</text>
<path d="M1.2 633.7H12.7L19.6 641.5L12.7 649.3H1.2Q0.7 649.3 0.7 648.8V634.2Q0.7 633.7 1.2 633.7Z" fill="#000" stroke="#ffff00" stroke-width="1.3"/>
<path d="M7 636.0H9.4V647.0H7V639.1L5.2 640.5L4.3 639.2Z" fill="#ffff00"/>
</svg>
<div id="txt">
<div class="box" style="left:20px;top:652px;width:555px;height:21px"></div>
<div class="box" style="left:20px;top:674px;width:555px;height:39px"></div>
<div class="box" style="left:582px;top:670px;width:148px;height:38px"></div>
<div class="box" style="left:737px;top:670px;width:107px;height:38px"></div>
<div class="box" style="left:851px;top:670px;width:171px;height:39px"></div>
<div class="box" style="left:909px;top:729px;width:113px;height:37px"></div>
<div class="btn" style="left:20px"></div>
<div class="btn" style="left:138px"></div>
<div class="btn" style="left:256px"></div>
<div class="btn" style="left:374px"></div>
<div class="btn" style="left:492px"></div>
<div class="btn" style="left:728px"></div>
<div class="hl" style="left:56px;top:742px;width:42px;height:16px"></div>
<div class="hl" style="left:300px;top:742px;width:26px;height:16px"></div>
<div class="hl" style="left:519px;top:742px;width:60px;height:16px"></div>
<div class="hl" style="left:754px;top:733px;width:62px;height:16px"></div>
<div class="hl" style="left:377px;top:735px;width:32px;height:33px;border-radius:4px;border:1px solid #5c9cff;box-sizing:border-box"></div>
<svg style="position:absolute;left:374px;top:714px" width="114" height="54" viewBox="374 714 114 54"><g fill="none" stroke="#fff" stroke-width="1.1"><path d="M381 761.5H388.6L397.4 742.5H405.3"/><path d="M419.2 742.5H426L435.5 761.5H443" stroke="#e8e8e8"/><path d="M457 742.5H464.5L473.5 761.5H481M457 761.5H464.5L473.5 742.5H481" stroke="#e8e8e8"/></g></svg>
<div class="pill" style="left:26px;top:655px;background:#ffff00"></div>
<svg style="position:absolute;left:26px;top:655px" width="25" height="16" viewBox="0 0 25 16"><path d="M12.2 2H14.3V13H12.2V4.9L10.4 6.3L9.5 5.1Z" fill="#000"/></svg>
<div class="pill" style="left:165px;top:655px;background:#00e0e0"></div>
<div class="t" style="left:165px;top:654px;width:25px;text-align:center;color:#000">2</div>
<div class="pill" style="left:304px;top:655px;background:#a800a8"></div>
<div class="t" style="left:304px;top:654px;width:25px;text-align:center;color:#000">3</div>
<div class="pill" style="left:443px;top:655px;background:#00a800"></div>
<div class="t" style="left:443px;top:654px;width:25px;text-align:center;color:#000">4</div>
<div class="pill" style="left:26px;top:695px;background:#ffff00"></div>
<svg style="position:absolute;left:26px;top:695px" width="25" height="16" viewBox="0 0 25 16"><path d="M12.2 2H14.3V13H12.2V4.9L10.4 6.3L9.5 5.1Z" fill="#000"/></svg>
<div class="pill" style="left:183px;top:742px;background:#a800a8"></div>
<div class="t" style="left:183px;top:741px;width:25px;text-align:center;color:#000">3</div>
<div class="pill" style="left:882px;top:673px;background:#a800a8"></div>
<div class="t" style="left:882px;top:672px;width:25px;text-align:center;color:#000">3</div>
<svg style="position:absolute;left:918px;top:672px" width="18" height="16" viewBox="918 672 18 16"><path d="M920 685H925.5L928.5 676H933" fill="none" stroke="#fff" stroke-width="2"/></svg>
<svg style="position:absolute;left:586px;top:689px" width="38" height="17" viewBox="586 689 38 17"><rect x="587" y="691" width="12" height="13" rx="2" fill="#ff9900"/><path d="M589 693.5H597M593 693.5V702.5" stroke="#000" stroke-width="2" fill="none"/><path d="M600 697.5H608M605 694.5L608.3 697.5L605 700.5" stroke="#ff9900" stroke-width="1.3" fill="none"/><path d="M610.2 694.6H621.4L615.8 700.2Z" fill="#ff9900"/></svg>
<div id="tek">Tek</div>
<div class="t" style="left:34.90px;top:-1px;color:#fff;letter-spacing:2.05px;font-size:14.5px">Run</div>
<div class="t" style="left:925.00px;top:-1px;color:#fff;letter-spacing:1.25px">Trig?</div>
<div class="t" style="left:68.70px;top:654px;color:#ffff00;letter-spacing:0.88px">5.00 V</div>
<div class="t" style="left:207.75px;top:654px;color:#00e0e0;letter-spacing:0.85px">5.00 V</div>
<div class="t" style="left:347.00px;top:654px;color:#b000b0;letter-spacing:0.80px">1.00 V</div>
<div class="t" style="left:486.00px;top:654px;color:#00b400;letter-spacing:0.80px">1.00 V</div>
<div class="t" style="left:158.00px;top:676px;color:#fff;letter-spacing:1.06px">Value</div>
<div class="t" style="left:245.90px;top:676px;color:#fff;letter-spacing:1.20px">Mean</div>
<div class="t" style="left:328.75px;top:676px;color:#fff;letter-spacing:2.62px">Min</div>
<div class="t" style="left:410.60px;top:676px;color:#fff;letter-spacing:0.70px">Max</div>
<div class="t" style="left:492.50px;top:676px;color:#fff;letter-spacing:0.92px">Std Dev</div>
<div class="t" style="left:158.60px;top:694px;color:#ffff00;letter-spacing:1.35px">117mV</div>
<div class="t" style="left:247.00px;top:694px;color:#ffff00;letter-spacing:1.47px">122m</div>
<div class="t" style="left:329.60px;top:694px;color:#ffff00;letter-spacing:1.60px">113m</div>
<div class="t" style="left:411.50px;top:694px;color:#ffff00;letter-spacing:1.33px">130m</div>
<div class="t" style="left:492.50px;top:694px;color:#ffff00;letter-spacing:1.75px">5.45m</div>
<div class="t" style="left:55.60px;top:694px;color:#ffff00;letter-spacing:0.00px;transform-origin:1px 0;transform:scaleX(0.967)">RMS</div>
<div class="t" style="left:57.25px;top:724px;color:#fff;letter-spacing:2.12px">Type</div>
<div class="t" style="left:58.00px;top:741px;color:#fff;letter-spacing:0.47px">Edge</div>
<div class="t" style="left:168.40px;top:724px;color:#fff;letter-spacing:0.77px">Source</div>
<div class="t" style="left:277.50px;top:724px;color:#fff;letter-spacing:1.70px">Coupling</div>
<div class="t" style="left:301.40px;top:741px;color:#fff;letter-spacing:0.80px">DC</div>
<div class="t" style="left:409.90px;top:716px;color:#fff;letter-spacing:0.88px">Slope</div>
<div class="t" style="left:529.25px;top:724px;color:#fff;letter-spacing:1.12px">Level</div>
<div class="t" style="left:522.00px;top:741px;color:#fff;letter-spacing:1.38px">580mV</div>
<div class="t" style="left:763.75px;top:715px;color:#fff;letter-spacing:1.50px">Mode</div>
<div class="t" style="left:756.50px;top:732px;color:#fff;letter-spacing:1.50px">Normal</div>
<div class="t" style="left:747.75px;top:749px;color:#fff;letter-spacing:1.53px">&amp; Holdoff</div>
<div class="t" style="left:588.20px;top:672px;color:#fff;letter-spacing:1.64px">4.00µs</div>
<div class="t" style="left:622.90px;top:689px;color:#ff9900;letter-spacing:1.32px">8.000000µs</div>
<div class="t" style="left:743.60px;top:672px;color:#fff;letter-spacing:0.95px">2.50GS/s</div>
<div class="t" style="left:743.90px;top:689px;color:#fff;letter-spacing:1.55px">1M points</div>
<div class="t" style="left:961.90px;top:672px;color:#fff;letter-spacing:1.08px">580mV</div>
<div class="t" style="left:925.75px;top:732px;color:#fff;letter-spacing:0.00px">8</div>
<div class="t" style="left:939.75px;top:732px;color:#fff;letter-spacing:0.62px">Feb</div>
<div class="t" style="left:978.50px;top:732px;color:#fff;letter-spacing:1.25px">2022</div>
<div class="t" style="left:916.25px;top:748px;color:#fff;letter-spacing:1.31px">16:08:46</div>
</div>
</body></html>
